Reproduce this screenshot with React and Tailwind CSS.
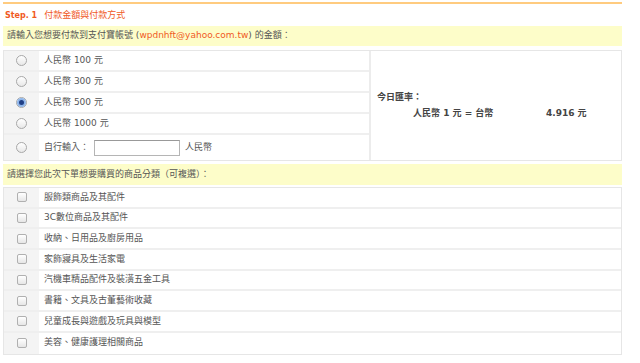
import React from 'react';

const amounts = ['100', '300', '500', '1000'];

const categories = [
  '服飾類商品及其配件',
  '3C數位商品及其配件',
  '收納、日用品及廚房用品',
  '家飾寢具及生活家電',
  '汽機車精品配件及裝潢五金工具',
  '書籍、文具及古董藝術收藏',
  '兒童成長與遊戲及玩具與模型',
  '美容、健康護理相關商品',
];

const Radio = ({ checked }) => (
  <span className="inline-flex h-[11px] w-[11px] items-center justify-center rounded-full border border-[#a8a8a8] bg-gradient-to-b from-white to-[#e8e8e8]">
    {checked && <span className="h-[5px] w-[5px] rounded-full bg-[#1f3f86] ring-2 ring-[#8fb6ea]" />}
  </span>
);

const Checkbox = () => (
  <span className="inline-block h-[10px] w-[10px] rounded-[2px] border border-[#b0b0b0] bg-gradient-to-b from-white to-[#e6e6e6]" />
);

const App = () => {
  return (
    <div
      className="w-[640px] h-[363px] bg-white pl-[3px] pr-[18px] pt-[2px] text-[9px] text-[#555]"
      style={{ fontFamily: '"DejaVu Sans", Verdana, "Noto Sans CJK TC", sans-serif' }}
    >
      <div className="border-t-2 border-[#ffcb7f]" />
      <div className="flex h-[22px] items-center gap-[7px] pl-[2px] pt-[1px] text-[#f05a1f]">
        <span className="text-[8px] font-bold">Step. 1</span>
        <span>付款金額與付款方式</span>
      </div>

      <div className="flex h-[20px] items-center bg-[#fdfdc9] pl-[4px] text-[#555]">
        請輸入您想要付款到支付寶帳號 (<span className="text-[#f05a1f]">wpdnhft@yahoo.com.tw</span>) 的金額：
      </div>

      <div className="mt-[4px] flex border border-[#e6e6e6]">
        <div className="w-[367px] border-r-2 border-[#ececec]">
          {amounts.map((a) => (
            <div key={a} className="grid h-[21px] grid-cols-[35px_1fr] border-b-2 border-[#efefef]">
              <div className="flex items-center justify-center bg-[#f4f4f4]">
                <Radio checked={a === '500'} />
              </div>
              <div className="flex items-center pl-[5px]">人民幣 {a} 元</div>
            </div>
          ))}
          <div className="grid h-[25px] grid-cols-[35px_1fr]">
            <div className="flex items-center justify-center bg-[#f4f4f4]">
              <Radio />
            </div>
            <div className="flex items-center pl-[5px]">
              <span>自行輸入：</span>
              <span className="ml-[5px] inline-block h-[16px] w-[86px] border border-[#b5b5b5] border-t-[#999] bg-white" />
              <span className="ml-[5px]">人民幣</span>
            </div>
          </div>
        </div>
        <div className="flex flex-1 flex-col justify-center pl-[6px] font-semibold text-[#444]">
          <div>今日匯率：</div>
          <div className="mt-[3px] flex pl-[36px]">
            <span className="w-[133px]">人民幣 1 元 = 台幣</span>
            <span>4.916 元</span>
          </div>
        </div>
      </div>

      <div className="mt-[3px] flex h-[21px] items-center bg-[#fdfdc9] pl-[4px] text-[#555]">
        請選擇您此次下單想要購買的商品分類（可複選）：
      </div>

      <div className="mt-[2px] border border-[#e6e6e6]">
        {categories.map((c, i) => (
          <div
            key={c}
            className={`grid h-[20.7px] grid-cols-[35px_1fr] ${i < categories.length - 1 ? 'border-b-2 border-[#efefef]' : ''}`}
          >
            <div className="flex items-center justify-center bg-[#f4f4f4]">
              <Checkbox />
            </div>
            <div className="flex items-center pl-[5px]">{c}</div>
          </div>
        ))}
      </div>
    </div>
  );
};

export default App;
